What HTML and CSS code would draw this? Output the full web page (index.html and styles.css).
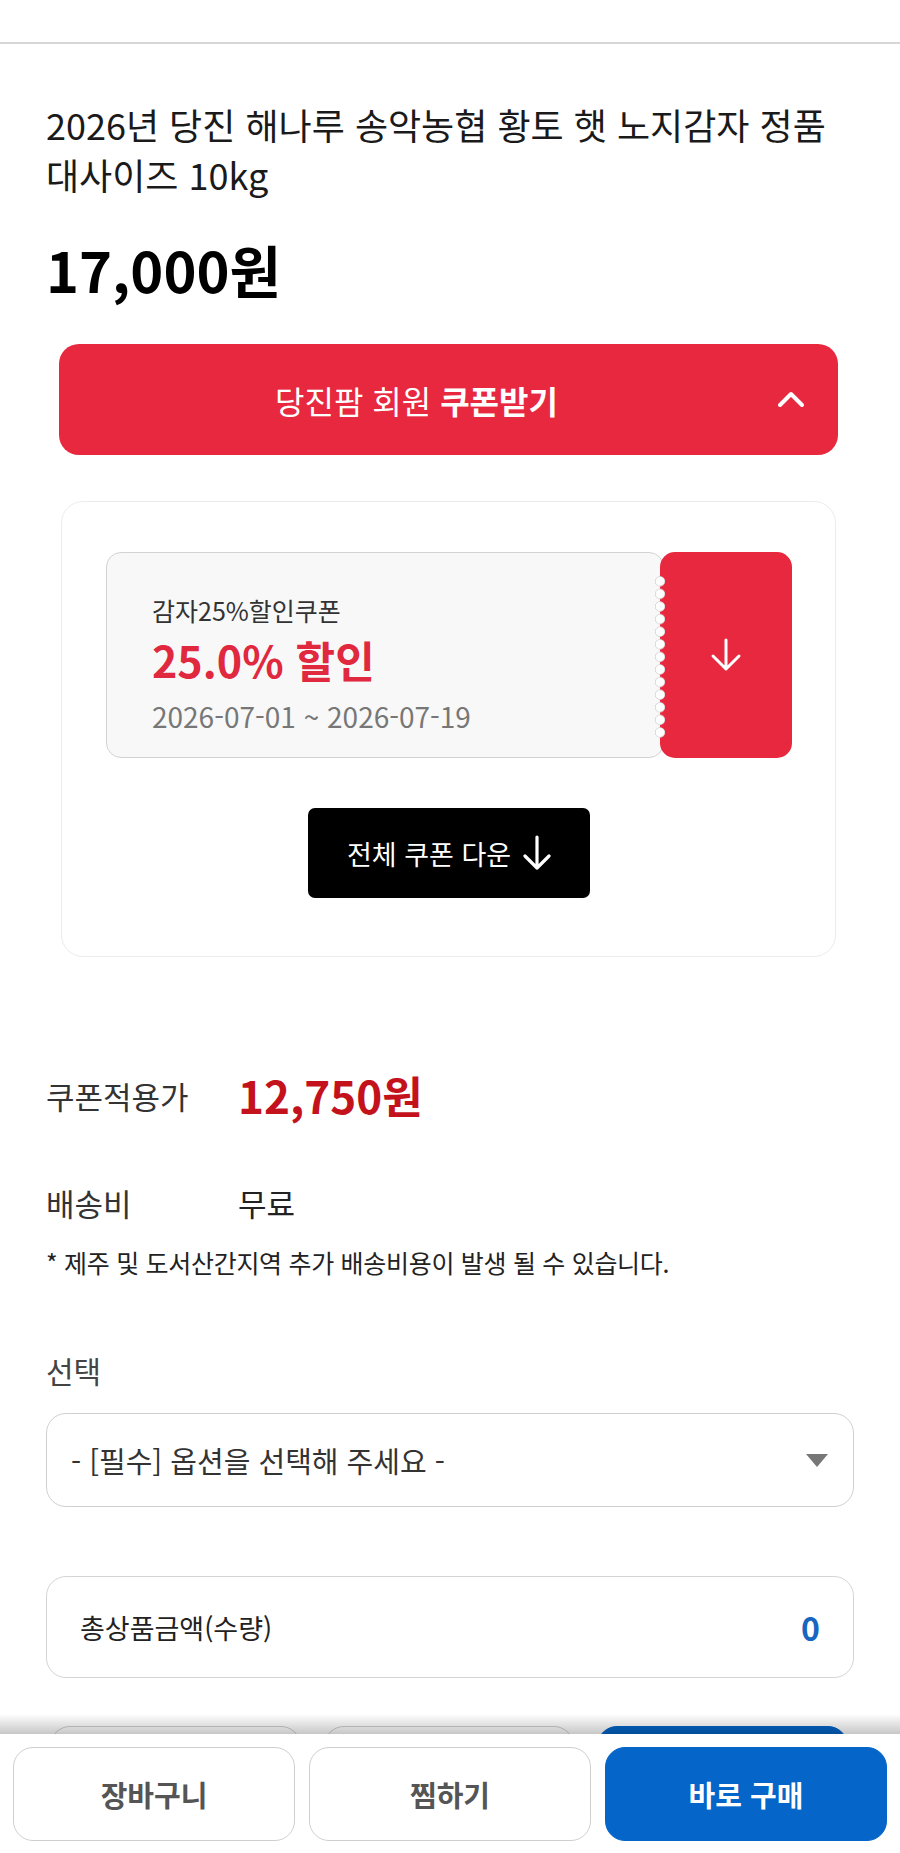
FILE: index.html
```html
<!DOCTYPE html>
<html lang="ko">
<head>
<meta charset="utf-8">
<title>상품 상세</title>
<link rel="stylesheet" href="styles.css">
</head>
<body>
<header class="top-bar"></header>
<main class="product">
  <h1 class="title">2026년 당진 해나루 송악농협 황토 햇 노지감자 정품 대사이즈 10kg</h1>
  <div class="price">17,000원</div>

  <button class="coupon-toggle" type="button">
    <span class="coupon-toggle-text">당진팜 회원 <b>쿠폰받기</b></span>
    <svg class="chevron" width="30" height="18" viewBox="0 0 30 18"><polyline points="4,15 15,4 26,15" fill="none" stroke="#fff" stroke-width="4" stroke-linecap="round" stroke-linejoin="round"/></svg>
  </button>

  <section class="coupon-box">
    <div class="ticket">
      <div class="ticket-info">
        <div class="ticket-name">감자25%할인쿠폰</div>
        <div class="ticket-rate">25.0% 할인</div>
        <div class="ticket-date">2026-07-01 ~ 2026-07-19</div>
      </div>
      <div class="ticket-down">
        <svg width="32" height="34" viewBox="0 0 32 34"><path d="M16 2 V31 M3 18 L16 31 L29 18" fill="none" stroke="#fff" stroke-width="3" stroke-linecap="round" stroke-linejoin="round"/></svg>
      </div>
    </div>
    <button class="all-down" type="button">
      <span>전체 쿠폰 다운</span>
      <svg width="28" height="36" viewBox="0 0 28 36"><path d="M14 2 V33 M2 21 L14 33 L26 21" fill="none" stroke="#fff" stroke-width="3.2" stroke-linecap="round" stroke-linejoin="round"/></svg>
    </button>
  </section>

  <div class="info-row coupon-price-row">
    <span class="info-label">쿠폰적용가</span>
    <span class="coupon-price">12,750원</span>
  </div>
  <div class="info-row ship-row">
    <span class="info-label">배송비</span>
    <span class="info-value">무료</span>
  </div>
  <p class="ship-note">* 제주 및 도서산간지역 추가 배송비용이 발생 될 수 있습니다.</p>

  <div class="option-label">선택</div>
  <div class="select-box">
    <span>- [필수] 옵션을 선택해 주세요 -</span>
    <span class="select-caret"></span>
  </div>

  <div class="total-box">
    <span>총상품금액(수량)</span>
    <span class="total-value">0</span>
  </div>

  <div class="inline-actions" aria-hidden="true">
    <div class="ghost-btn"></div>
    <div class="ghost-btn"></div>
    <div class="ghost-btn ghost-primary"></div>
  </div>
</main>

<nav class="bottom-bar">
  <button class="bar-btn" type="button">장바구니</button>
  <button class="bar-btn" type="button">찜하기</button>
  <button class="bar-btn bar-primary" type="button">바로 구매</button>
</nav>
</body>
</html>
```
FILE: styles.css
```css
* { box-sizing: border-box; }
html, body { margin: 0; padding: 0; background: #fff; }
body {
  font-family: "Noto Sans CJK KR", "Noto Sans", "Liberation Sans", sans-serif;
  color: #222;
}
button { font-family: inherit; border: 0; padding: 0; cursor: pointer; }

.top-bar {
  height: 44px;
  border-bottom: 2px solid #d6d6d6;
}

.product { padding: 0 46px 140px; }

.title {
  margin: 55px 0 0;
  font-size: 36px;
  font-weight: 400;
  line-height: 50px;
  color: #1a1a1a;
}

.price {
  margin-top: 38px;
  font-size: 56px;
  line-height: 64px;
  font-weight: 700;
  color: #000;
}

.coupon-toggle {
  margin: 43px 16px 0 13px;
  width: calc(100% - 29px);
  height: 111px;
  border-radius: 20px;
  background: #e8283f;
  color: #fff;
  display: flex;
  align-items: center;
  justify-content: center;
  padding-right: 64px;
  position: relative;
  font-size: 32px;
}
.coupon-toggle-text b { font-weight: 700; }
.chevron { position: absolute; right: 32px; top: 46px; }

.coupon-box {
  margin: 46px 18px 0 15px;
  border: 1.5px solid #ececec;
  border-radius: 22px;
  padding: 50px 43px 58px 44px;
  display: flex;
  flex-direction: column;
  align-items: center;
}

.ticket {
  width: 100%;
  height: 206px;
  display: flex;
}
.ticket-info {
  flex: 1;
  background: #f8f8f8;
  border: 1.5px solid #d2d2d2;
  border-radius: 15px;
  padding: 42px 0 0 45px;
  margin-right: -4px;
}
.ticket-name {
  font-size: 25px;
  line-height: 30px;
  color: #333;
}
.ticket-rate {
  margin-top: 7px;
  font-size: 43px;
  line-height: 54px;
  font-weight: 700;
  color: #e0283e;
}
.ticket-date {
  margin-top: 14px;
  font-size: 28px;
  line-height: 32px;
  color: #777;
}
.ticket-down {
  width: 132px;
  background: #e8283f;
  border-radius: 15px;
  display: flex;
  align-items: center;
  justify-content: center;
  position: relative;
}
.ticket-down::before {
  content: "";
  position: absolute;
  left: -5px;
  top: 23px;
  bottom: 19px;
  width: 10px;
  background: radial-gradient(circle at 5px 6.3px, #ffffff 0, #ffffff 4px, #d0d0d0 4.8px, rgba(255,255,255,0) 5.4px) 0 0 / 10px 12.6px repeat-y;
}

.all-down {
  margin-top: 50px;
  width: 282px;
  height: 90px;
  background: #000;
  color: #fff;
  border-radius: 7px;
  display: flex;
  align-items: center;
  justify-content: center;
  gap: 12px;
  font-size: 27px;
}

.info-row { display: flex; align-items: center; }
.info-label { width: 192px; font-size: 31px; color: #333; }
.coupon-price-row { margin-top: 110px; height: 56px; }
.coupon-price {
  font-size: 44px;
  font-weight: 700;
  color: #c4121d;
}
.ship-row { margin-top: 59px; height: 40px; }
.info-value { font-size: 31px; color: #222; }

.ship-note {
  margin: 23px 0 0;
  font-size: 25px;
  line-height: 34px;
  color: #222;
  letter-spacing: -0.3px;
}

.option-label {
  margin-top: 71px;
  font-size: 30px;
  line-height: 40px;
  color: #444;
}

.select-box {
  margin-top: 23px;
  height: 94px;
  border: 1.5px solid #cfcfcf;
  border-radius: 20px;
  display: flex;
  align-items: center;
  justify-content: space-between;
  padding: 0 25px 0 24px;
  font-size: 29px;
  color: #333;
}
.select-caret {
  width: 0; height: 0;
  border-left: 11px solid transparent;
  border-right: 11px solid transparent;
  border-top: 13px solid #777;
}

.total-box {
  margin-top: 69px;
  height: 102px;
  border: 1.5px solid #d4d4d4;
  border-radius: 20px;
  display: flex;
  align-items: center;
  justify-content: space-between;
  padding: 0 33px 0 33px;
  font-size: 27px;
  color: #222;
}
.total-value { font-size: 32px; font-weight: 700; color: #1767c0; }

.inline-actions {
  margin-top: 48px;
  display: grid;
  grid-template-columns: repeat(3, 1fr);
  gap: 23px;
  padding: 0 6px 0 4px;
}
.ghost-btn {
  height: 90px;
  border: 1.5px solid #cfcfcf;
  border-radius: 20px;
  background: #fff;
}
.ghost-primary { background: #0565c8; border-color: #0565c8; }

.bottom-bar {
  position: fixed;
  left: 0; right: 0; bottom: 0;
  height: 119px;
  background: #fff;
  padding: 13px 13px 12px;
  display: grid;
  grid-template-columns: repeat(3, 1fr);
  gap: 14px;
}
.bottom-bar::before {
  content: "";
  position: absolute;
  left: 0; right: 0;
  top: -20px;
  height: 20px;
  background: linear-gradient(to bottom, rgba(0,0,0,0), rgba(0,0,0,0.22));
}
.bar-btn {
  height: 94px;
  border-radius: 20px;
  background: #fff;
  border: 1.5px solid #cfcfcf;
  font-size: 29px;
  font-weight: 700;
  color: #555;
}
.bar-primary { background: #0565c8; border-color: #0565c8; color: #fff; }
```
